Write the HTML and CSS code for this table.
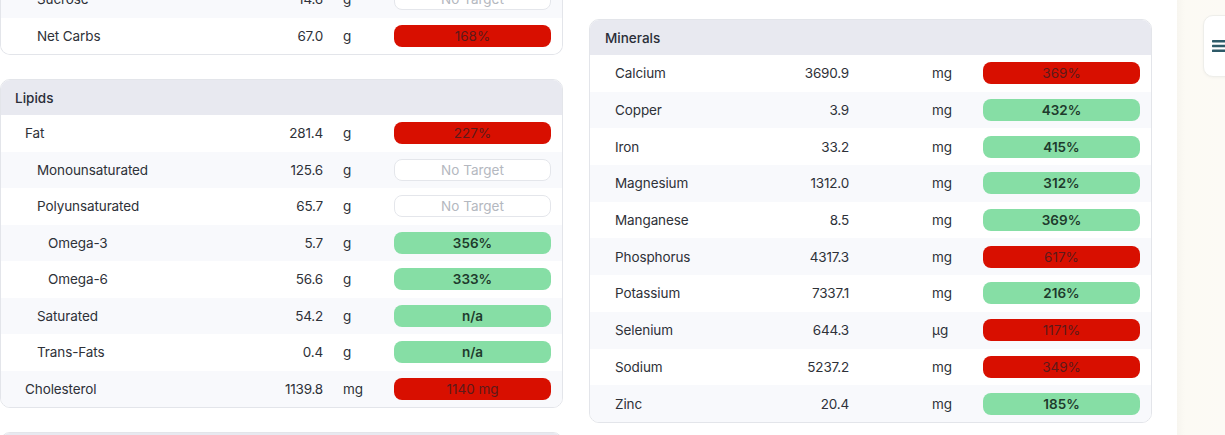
FILE: index.html
```html
<!DOCTYPE html>
<html>
<head>
<meta charset="utf-8">
<link rel="stylesheet" href="styles.css">
</head>
<body>
<div class="app">
  <main class="main">
    <div class="col col-left">
      <section class="card card-cut">
        <div class="row even"><span class="name l1">Sucrose</span><span class="val">14.6</span><span class="unit">g</span><span class="bar none">No Target</span></div>
        <div class="row"><span class="name l1">Net Carbs</span><span class="val">67.0</span><span class="unit">g</span><span class="bar red">168%</span></div>
      </section>
      <section class="card">
        <div class="head">Lipids</div>
        <div class="row"><span class="name">Fat</span><span class="val">281.4</span><span class="unit">g</span><span class="bar red">227%</span></div>
        <div class="row even"><span class="name l1">Monounsaturated</span><span class="val">125.6</span><span class="unit">g</span><span class="bar none">No Target</span></div>
        <div class="row"><span class="name l1">Polyunsaturated</span><span class="val">65.7</span><span class="unit">g</span><span class="bar none">No Target</span></div>
        <div class="row even"><span class="name l2">Omega-3</span><span class="val">5.7</span><span class="unit">g</span><span class="bar green">356%</span></div>
        <div class="row"><span class="name l2">Omega-6</span><span class="val">56.6</span><span class="unit">g</span><span class="bar green">333%</span></div>
        <div class="row even"><span class="name l1">Saturated</span><span class="val">54.2</span><span class="unit">g</span><span class="bar green">n/a</span></div>
        <div class="row"><span class="name l1">Trans-Fats</span><span class="val">0.4</span><span class="unit">g</span><span class="bar green">n/a</span></div>
        <div class="row even"><span class="name">Cholesterol</span><span class="val">1139.8</span><span class="unit">mg</span><span class="bar red">1140 mg</span></div>
      </section>
      <section class="card card-next">
        <div class="head">&nbsp;</div>
      </section>
    </div>
    <div class="col col-right">
      <section class="card minerals">
        <div class="head">Minerals</div>
        <div class="row"><span class="name">Calcium</span><span class="val">3690.9</span><span class="unit">mg</span><span class="bar red">369%</span></div>
        <div class="row even"><span class="name">Copper</span><span class="val">3.9</span><span class="unit">mg</span><span class="bar green">432%</span></div>
        <div class="row"><span class="name">Iron</span><span class="val">33.2</span><span class="unit">mg</span><span class="bar green">415%</span></div>
        <div class="row even"><span class="name">Magnesium</span><span class="val">1312.0</span><span class="unit">mg</span><span class="bar green">312%</span></div>
        <div class="row"><span class="name">Manganese</span><span class="val">8.5</span><span class="unit">mg</span><span class="bar green">369%</span></div>
        <div class="row even"><span class="name">Phosphorus</span><span class="val">4317.3</span><span class="unit">mg</span><span class="bar red">617%</span></div>
        <div class="row"><span class="name">Potassium</span><span class="val">7337.1</span><span class="unit">mg</span><span class="bar green">216%</span></div>
        <div class="row even"><span class="name">Selenium</span><span class="val">644.3</span><span class="unit">µg</span><span class="bar red">1171%</span></div>
        <div class="row"><span class="name">Sodium</span><span class="val">5237.2</span><span class="unit">mg</span><span class="bar red">349%</span></div>
        <div class="row even"><span class="name">Zinc</span><span class="val">20.4</span><span class="unit">mg</span><span class="bar green">185%</span></div>
      </section>
    </div>
  </main>
  <aside class="side">
    <button class="menu-btn" aria-label="Menu">
      <svg width="16" height="14" viewBox="0 0 16 14"><rect x="0" y="1" width="16" height="2.4" rx="0.6" fill="#2d5a68"/><rect x="0" y="5.8" width="16" height="2.4" rx="0.6" fill="#2d5a68"/><rect x="0" y="10.6" width="16" height="2.4" rx="0.6" fill="#2d5a68"/></svg>
    </button>
  </aside>
</div>
</body>
</html>
```
FILE: styles.css
```css
* { box-sizing: border-box; }
html, body { margin: 0; padding: 0; }
body {
  font-family: Inter, "Liberation Sans", sans-serif;
  font-size: 13.5px;
  color: #2e3138;
  background: #ffffff;
  overflow: hidden;
  height: 435px;
}
.app {
  display: flex;
  width: 1225px;
  height: 435px;
  overflow: hidden;
}
.main {
  width: 1177px;
  height: 435px;
  overflow: hidden;
  flex: none;
  display: flex;
  align-items: flex-start;
  gap: 26px;
  padding-right: 25px;
  background: #fff;
}
.col {
  width: 563px;
  flex: none;
  display: flex;
  flex-direction: column;
  gap: 24px;
}
.col-left { margin-top: -19px; }
.col-right { padding-top: 19px; }
.card {
  flex: none;
  border: 1px solid #e3e5ea;
  border-radius: 10px;
  background: #fff;
  overflow: hidden;
}
.card-cut {
  border-top: none;
  border-top-left-radius: 0;
  border-top-right-radius: 0;
}
.head {
  height: 35px;
  background: #e8e9f0;
  display: flex;
  align-items: center;
  padding-left: 14px;
  font-weight: 500;
  font-size: 13.5px;
  color: #2a2e38;
}
.minerals .head { padding-left: 15px; }
.row {
  height: 36.5px;
  display: grid;
  grid-template-columns: 1fr auto 51px 157px;
  align-items: center;
  padding-right: 11px;
  background: #fff;
}
.minerals .row { height: 36.7px; }
.row.even { background: #f8f9fc; }
.name { padding-left: 24px; letter-spacing: -0.1px; }
.name.l1 { padding-left: 36px; }
.name.l2 { padding-left: 47px; }
.val { text-align: right; padding-right: 20px; letter-spacing: -0.2px; }
.minerals .val { padding-right: 83px; }
.minerals .name { padding-left: 25px; }
.bar {
  height: 22px;
  border-radius: 8px;
  display: flex;
  align-items: center;
  justify-content: center;
  font-size: 13.5px;
}
.bar.red { background: #d80f00; color: #5c1a1a; }
.bar.green { background: #86dea5; color: #1e3a2c; font-weight: 600; }
.bar.none { background: #fff; border: 1px solid #e4e6eb; color: #b4b8c0; }
.side {
  flex: 1;
  background: linear-gradient(90deg, #f7f5ef 0, #fcfaf4 8px, #fcfaf5 100%);
  padding-top: 15px;
  padding-left: 26px;
  overflow: hidden;
}
.menu-btn {
  width: 40px;
  height: 62px;
  border: 1px solid #eeeeea;
  border-radius: 10px;
  background: #fff;
  box-shadow: 0 1px 3px rgba(0,0,0,0.04);
  padding: 0 0 0 8px;
  display: flex;
  align-items: center;
  justify-content: flex-start;
}
.menu-btn svg { display: block; }
```
